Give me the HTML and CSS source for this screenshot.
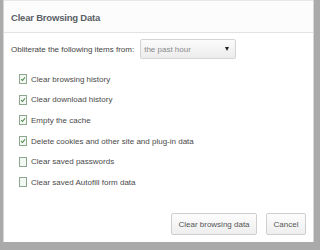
FILE: index.html
```html
<!DOCTYPE html>
<html>
<head>
<meta charset="utf-8">
<link rel="stylesheet" href="styles.css">
</head>
<body>
<div class="dialog">
  <div class="header"><span class="title">Clear Browsing Data</span></div>
  <div class="content">
    <div class="range-row">
      <span class="label">Obliterate the following items from:</span>
      <div class="select"><span>the past hour</span><span class="arrow"></span></div>
    </div>
    <ul class="list">
      <li><span class="cb checked"><svg viewBox="0 0 8 8"><path d="M1.5 4.2 L3.3 6 L6.6 1.8" /></svg></span>Clear browsing history</li>
      <li><span class="cb checked"><svg viewBox="0 0 8 8"><path d="M1.5 4.2 L3.3 6 L6.6 1.8" /></svg></span>Clear download history</li>
      <li><span class="cb checked"><svg viewBox="0 0 8 8"><path d="M1.5 4.2 L3.3 6 L6.6 1.8" /></svg></span>Empty the cache</li>
      <li><span class="cb checked"><svg viewBox="0 0 8 8"><path d="M1.5 4.2 L3.3 6 L6.6 1.8" /></svg></span>Delete cookies and other site and plug-in data</li>
      <li><span class="cb"></span>Clear saved passwords</li>
      <li><span class="cb"></span>Clear saved Autofill form data</li>
    </ul>
  </div>
  <div class="footer">
    <button class="btn btn-clear">Clear browsing data</button>
    <button class="btn btn-cancel">Cancel</button>
  </div>
</div>
</body>
</html>
```
FILE: styles.css
```css
html, body {
  margin: 0;
  padding: 0;
}
body {
  width: 320px;
  height: 250px;
  background: #aaaaaa;
  font-family: "Liberation Sans", Arial, sans-serif;
  color: #4a4a4a;
  overflow: hidden;
}
.dialog {
  margin-left: 3px;
  width: 311px;
  height: 242px;
  background: #ffffff;
  border-left: 1px solid #d6d6d6;
  border-right: 1px solid #d6d6d6;
  display: flex;
  flex-direction: column;
  box-sizing: border-box;
}
.header {
  height: 33px;
  box-sizing: border-box;
  border-top: 1px solid #e8e8e8;
  border-bottom: 1px solid #e2e2e2;
  background: #fcfcfc;
  display: flex;
  align-items: center;
  padding-left: 7px;
}
.title {
  font-size: 9.5px;
  font-weight: bold;
  color: #5a5f66;
  letter-spacing: -0.2px;
  margin-top: 1px;
}
.content {
  padding: 6px 0 0 7px;
}
.range-row {
  display: flex;
  align-items: center;
  height: 20px;
}
.label {
  font-size: 8px;
  color: #444;
}
.select {
  margin-left: 6px;
  width: 96px;
  height: 20px;
  box-sizing: border-box;
  border: 1px solid #d4d4d4;
  border-radius: 2px;
  background: linear-gradient(#fbfbfb, #ececec);
  display: flex;
  align-items: center;
  justify-content: space-between;
  padding: 0 6px 0 3px;
  font-size: 8px;
  color: #8a8a8a;
}
.arrow {
  width: 0;
  height: 0;
  border-left: 2.5px solid transparent;
  border-right: 2.5px solid transparent;
  border-top: 4px solid #222;
}
.list {
  list-style: none;
  margin: 10px 0 0 0;
  padding: 0 0 0 8px;
}
.list li {
  height: 20.6px;
  display: flex;
  align-items: center;
  font-size: 8px;
  color: #4a4a4a;
}
.cb {
  width: 6px;
  height: 8px;
  border: 1px solid #8ea68e;
  background: #f4f8f4;
  margin-right: 4px;
  display: flex;
  align-items: center;
  justify-content: center;
  flex: none;
}
.cb svg {
  width: 6px;
  height: 6px;
}
.cb svg path {
  fill: none;
  stroke: #4d8a4d;
  stroke-width: 1.4;
}
.footer {
  margin-top: auto;
  display: flex;
  justify-content: flex-end;
  gap: 9px;
  padding: 0 7px 7px 0;
}
.btn {
  height: 22px;
  box-sizing: border-box;
  border: 1px solid #cfcfcf;
  border-radius: 2px;
  background: linear-gradient(#fdfdfd, #eeeeee);
  font-family: "Liberation Sans", Arial, sans-serif;
  font-size: 8px;
  color: #555;
  padding: 0;
}
.btn-clear {
  width: 86px;
}
.btn-cancel {
  width: 40px;
}
```
